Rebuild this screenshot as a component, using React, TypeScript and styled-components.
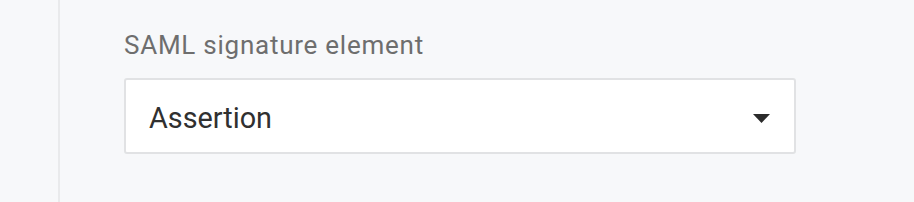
import React from "react";
import styled, { createGlobalStyle } from "styled-components";

const Global = createGlobalStyle`
  html, body { margin: 0; padding: 0; background: #f7f8fa; }
  body { font-family: Roboto, "Noto Sans", sans-serif; }
`;

const Page = styled.div`
  display: flex;
  height: 202px;
  background: #f7f8fa;
`;

const Sidebar = styled.div`
  width: 58px;
  flex: none;
  border-right: 2px solid #e9eaec;
`;

const Main = styled.div`
  flex: 1;
  padding: 30px 0 0 64px;
`;

const Field = styled.div`
  display: flex;
  flex-direction: column;
  width: 672px;
`;

const Label = styled.label`
  font-size: 26px;
  line-height: 30px;
  letter-spacing: 0.75px;
  color: #6e6e6e;
  margin-bottom: 18px;
`;

const SelectBox = styled.div`
  box-sizing: border-box;
  height: 76px;
  display: flex;
  align-items: center;
  justify-content: space-between;
  padding: 3px 24px 0 23px;
  background: #ffffff;
  border: 2px solid #e1e2e4;
  border-radius: 3px;
`;

const Value = styled.span`
  font-size: 28.8px;
  color: #303030;
`;

const Caret = styled.svg`
  width: 17px;
  height: 9px;
  display: block;
  margin-top: 1px;
`;

export default function App() {
  return (
    <>
      <Global />
      <Page>
        <Sidebar />
        <Main>
          <Field>
            <Label>SAML signature element</Label>
            <SelectBox>
              <Value>Assertion</Value>
              <Caret viewBox="0 0 17 9">
                <path d="M0 0 H17 L8.5 9 Z" fill="#2b2b2b" />
              </Caret>
            </SelectBox>
          </Field>
        </Main>
      </Page>
    </>
  );
}
